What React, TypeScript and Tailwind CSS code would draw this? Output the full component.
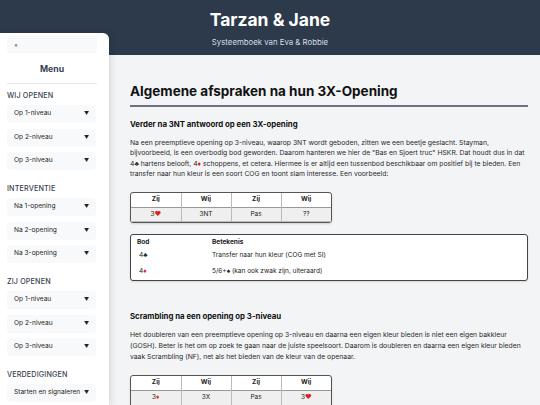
import React from "react";

type Section = { title: string; items: string[] };

const MENU: Section[] = [
  { title: "Wij openen", items: ["Op 1-niveau", "Op 2-niveau", "Op 3-niveau"] },
  { title: "Interventie", items: ["Na 1-opening", "Na 2-opening", "Na 3-opening"] },
  { title: "Zij openen", items: ["Op 1-niveau", "Op 2-niveau", "Op 3-niveau"] },
  { title: "Verdedigingen", items: ["Starten en signaleren"] },
];

const Red = ({ children }: { children: React.ReactNode }) => (
  <span className="text-[#e11d1d]">{children}</span>
);

function Sidebar() {
  return (
    <aside className="absolute left-0 top-[33px] bottom-0 w-[109px] overflow-hidden rounded-tr-[6px] bg-white px-[7px] pt-[3px] shadow-[2px_0_6px_rgba(0,0,0,0.12)]">
      <div className="flex h-[17px] w-[90px] items-center rounded-[4px] bg-[#f8f9fa] pl-[7px] text-[6px] text-[#333]">
        ×
      </div>
      <div className="mt-[9px] w-[90px] text-center text-[8.7px] font-bold leading-[14px] text-[#374151]">
        Menu
      </div>
      <div className="mt-[7px] w-[90px] border-b border-[#e5e7eb]" />
      <nav className="pt-[5px]">
        {MENU.map((s, i) => (
          <div key={s.title} className={i === 0 ? "mt-[3px]" : "mt-[15px]"}>
            <div className="text-[7.2px] font-medium uppercase leading-[8px] tracking-[0.02em] text-[#374151]">
              {s.title}
            </div>
            <div className="mt-[5px] flex flex-col gap-[5.5px]">
              {s.items.map((it) => (
                <div
                  key={it}
                  className="flex h-[18px] w-[89px] items-center justify-between rounded-[4px] bg-[#f8f9fa] pl-[7px] pr-[7px] text-[6.6px] text-[#222]"
                >
                  <span className="whitespace-nowrap">{it}</span>
                  <span className="text-[5px]">▼</span>
                </div>
              ))}
            </div>
          </div>
        ))}
      </nav>
    </aside>
  );
}

function BidTable({ rows }: { rows: React.ReactNode[][] }) {
  const head = ["Zij", "Wij", "Zij", "Wij"];
  return (
    <div className="w-[202px] overflow-hidden rounded-[3px] border border-[#555] bg-white shadow-[0_1px_2px_rgba(0,0,0,0.15)]">
      <table className="w-full table-fixed border-collapse text-center text-[6.5px] text-[#222]">
        <thead>
          <tr className="h-[14.5px] border-b border-[#999]">
            {head.map((h, i) => (
              <th key={i} className={`font-bold ${i < 3 ? "border-r border-[#bbb]" : ""}`}>
                {h}
              </th>
            ))}
          </tr>
        </thead>
        <tbody>
          {rows.map((r, ri) => (
            <tr key={ri} className="h-[14.5px] bg-[#efefef] border-b border-[#bbb]">
              {r.map((c, ci) => (
                <td key={ci} className={ci < 3 ? "border-r border-[#bbb]" : ""}>
                  {c}
                </td>
              ))}
            </tr>
          ))}
        </tbody>
      </table>
    </div>
  );
}

export default function App() {
  return (
    <div className="relative h-[405px] overflow-hidden bg-[#f3f4f6] font-['Inter',sans-serif] text-[#222]">
      <header className="flex h-[55px] flex-col items-center bg-[#2c3a4b] pt-[10px]">
        <h1 className="text-[17.5px] font-bold leading-[20px] text-white">Tarzan &amp; Jane</h1>
        <p className="mt-[7px] text-[7.8px] leading-[10px] text-[#d8dde3]">
          Systeemboek van Eva &amp; Robbie
        </p>
      </header>

      <main className="pl-[130px] pr-[12px] pt-[28px]">
        <h2 className="border-b-2 border-[#6b7280] pb-[6px] text-[13.5px] font-bold leading-[16px] text-[#111]">
          Algemene afspraken na hun 3X-Opening
        </h2>

        <h3 className="mt-[12px] text-[7.8px] font-bold leading-[10px] text-[#111]">
          Verder na 3NT antwoord op een 3X-opening
        </h3>
        <p className="mt-[9px] text-[6.8px] leading-[10.4px] text-[#2a2a2a]">
          Na een preemptieve opening op 3-niveau, waarop 3NT wordt geboden, zitten we een beetje
          geslacht. Stayman, bijvoorbeeld, is een overbodig bod geworden. Daarom hanteren we hier
          de "Bas en Sjoert truc" HSKR. Dat houdt dus in dat 4♣ hartens belooft, 4<Red>♦</Red>{" "}
          schoppens, et cetera. Hiermee is er altijd een tussenbod beschikbaar om positief bij te
          bieden. Een transfer naar hun kleur is een soort COG en toont slam interesse. Een
          voorbeeld:
        </p>

        <div className="mt-[12px]">
          <BidTable rows={[[<>3<Red>♥</Red></>, "3NT", "Pas", "??"]]} />
        </div>

        <div className="mt-[11px] rounded-[3px] border border-[#444] bg-white px-[6px] pb-[1px] pt-[3px] text-[6.5px] text-[#222] shadow-[0_1px_2px_rgba(0,0,0,0.12)]">
          <div className="flex h-[10px] items-center font-bold">
            <span className="w-[75px]">Bod</span>
            <span>Betekenis</span>
          </div>
          <div className="flex h-[15.5px] items-center">
            <span className="w-[75px] pl-[2px]">4♣</span>
            <span>Transfer naar hun kleur (COG met SI)</span>
          </div>
          <div className="flex h-[15.5px] items-center">
            <span className="w-[75px] pl-[2px]">
              4<Red>♦</Red>
            </span>
            <span>5/6+♠ (kan ook zwak zijn, uiteraard)</span>
          </div>
        </div>

        <h3 className="mt-[30px] text-[7.8px] font-bold leading-[10px] text-[#111]">
          Scrambling na een opening op 3-niveau
        </h3>
        <p className="mt-[8px] text-[6.8px] leading-[11px] text-[#2a2a2a]">
          Het doubleren van een preemptieve opening op 3-niveau en daarna een eigen kleur bieden is
          niet een eigen bakkleur (GOSH). Beter is het om op zoek te gaan naar de juiste
          speelsoort. Daarom is doubleren en daarna een eigen kleur bieden vaak Scrambling (NF),
          net als het bieden van de kleur van de openaar.
        </p>

        <div className="mt-[13px]">
          <BidTable
            rows={[
              [<>3<Red>♦</Red></>, "3X", "Pas", <>3<Red>♥</Red></>],
              ["", "", "", ""],
            ]}
          />
        </div>
      </main>

      <Sidebar />
    </div>
  );
}
